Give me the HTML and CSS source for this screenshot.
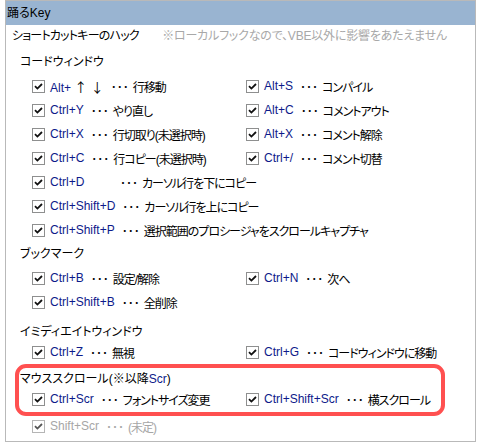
FILE: index.html
```html
<!DOCTYPE html>
<html lang="ja">
<head>
    <meta charset="UTF-8">
    <title>踊るKey</title>
    <link rel="stylesheet" href="styles.css">
</head>
<body>

    <div class="window">
        <div class="title-bar">踊るKey</div>

        <div class="content">
            <div class="hook-head">
                <span class="jp">ショートカットキーのハック</span>
                <span class="note">※ローカルフックなので、VBE以外に影響をあたえません</span>
            </div>

            <div class="section-title">コードウィンドウ</div>
            <div class="rows">
                <label class="opt"><span class="check"></span><span class="key">Alt+ <span class="arrow">↑</span> <span class="arrow">↓</span></span><span class="dots">･･･</span><span class="jp">行移動</span></label>
                <label class="opt"><span class="check"></span><span class="key">Alt+S</span><span class="dots">･･･</span><span class="jp">コンパイル</span></label>
                <label class="opt"><span class="check"></span><span class="key">Ctrl+Y</span><span class="dots">･･･</span><span class="jp">やり直し</span></label>
                <label class="opt"><span class="check"></span><span class="key">Alt+C</span><span class="dots">･･･</span><span class="jp">コメントアウト</span></label>
                <label class="opt"><span class="check"></span><span class="key">Ctrl+X</span><span class="dots">･･･</span><span class="jp">行切取り(未選択時)</span></label>
                <label class="opt"><span class="check"></span><span class="key">Alt+X</span><span class="dots">･･･</span><span class="jp">コメント解除</span></label>
                <label class="opt"><span class="check"></span><span class="key">Ctrl+C</span><span class="dots">･･･</span><span class="jp">行コピー(未選択時)</span></label>
                <label class="opt"><span class="check"></span><span class="key">Ctrl+/</span><span class="dots">･･･</span><span class="jp">コメント切替</span></label>
                <label class="opt wide"><span class="check"></span><span class="key key-pad">Ctrl+D</span><span class="dots">･･･</span><span class="jp">カーソル行を下にコピー</span></label>
                <label class="opt wide"><span class="check"></span><span class="key">Ctrl+Shift+D</span><span class="dots">･･･</span><span class="jp">カーソル行を上にコピー</span></label>
                <label class="opt wide"><span class="check"></span><span class="key">Ctrl+Shift+P</span><span class="dots">･･･</span><span class="jp">選択範囲のプロシージャをスクロールキャプチャ</span></label>
            </div>

            <div class="section-title">ブックマーク</div>
            <div class="rows">
                <label class="opt"><span class="check"></span><span class="key">Ctrl+B</span><span class="dots">･･･</span><span class="jp">設定/解除</span></label>
                <label class="opt"><span class="check"></span><span class="key">Ctrl+N</span><span class="dots">･･･</span><span class="jp">次へ</span></label>
                <label class="opt wide"><span class="check"></span><span class="key">Ctrl+Shift+B</span><span class="dots">･･･</span><span class="jp">全削除</span></label>
            </div>

            <div class="section-title short first-short">イミディエイトウィンドウ</div>
            <div class="rows short">
                <label class="opt"><span class="check"></span><span class="key">Ctrl+Z</span><span class="dots">･･･</span><span class="jp">無視</span></label>
                <label class="opt"><span class="check"></span><span class="key">Ctrl+G</span><span class="dots">･･･</span><span class="jp">コードウィンドウに移動</span></label>
            </div>

            <div class="highlight">
                <div class="section-title short">マウススクロール(※以降<span class="scr">Scr</span>)</div>
                <div class="rows short">
                    <label class="opt"><span class="check"></span><span class="key">Ctrl+Scr</span><span class="dots">･･･</span><span class="jp">フォントサイズ変更</span></label>
                    <label class="opt"><span class="check"></span><span class="key">Ctrl+Shift+Scr</span><span class="dots">･･･</span><span class="jp">横スクロール</span></label>
                </div>
            </div>
            <div class="rows short">
                <label class="opt wide disabled"><span class="check"></span><span class="key">Shift+Scr</span><span class="dots">･･･</span><span class="jp">(未定)</span></label>
            </div>
        </div>
    </div>

</body>
</html>
```

FILE: styles.css
```css
body {
    margin: 0;
    background-color: #ffffff;
    font-family: "Liberation Sans", "Noto Sans CJK JP", sans-serif;
    font-size: 12px;
    color: #000000;
    font-feature-settings: "palt";
}

.window {
    margin-left: 5px;
    width: 469px;
    height: 440px;
    border: 1px solid #b9b9b9;
}

.title-bar {
    height: 24px;
    line-height: 24px;
    padding-left: 1px;
    background-color: #99b4d1;
}

.jp {
    letter-spacing: -1px;
}

.hook-head {
    height: 22px;
    line-height: 22px;
    padding-left: 6px;
    margin-bottom: 3px;
}

.hook-head .jp {
    letter-spacing: -0.8px;
}

.hook-head .note {
    color: #a8a8a8;
    margin-left: 20px;
    letter-spacing: -0.2px;
}

.section-title {
    height: 24px;
    line-height: 24px;
    padding-left: 14px;
}

.section-title.short {
    height: 20px;
    line-height: 20px;
}

.first-short {
    margin-top: 8px;
}

.rows {
    display: grid;
    grid-template-columns: 214px 1fr;
    padding-left: 26px;
}

.opt {
    display: flex;
    align-items: center;
    height: 24px;
    white-space: nowrap;
}

.rows.short .opt {
    height: 20px;
}

.opt.wide {
    grid-column: 1 / 3;
}

.key {
    color: #0d1a8a;
}

.scr {
    color: #0d1a8a;
}

.arrow {
    font-family: "Noto Sans CJK JP", sans-serif;
    font-size: 13px;
    color: #000000;
}

.dots {
    font-family: "Noto Sans CJK JP", sans-serif;
    margin: 0 4px 0 7px;
    letter-spacing: 0;
}

.key-pad {
    display: inline-block;
    width: 63px;
}

.check {
    display: inline-block;
    width: 11px;
    height: 11px;
    margin-right: 5px;
    border: 1px solid #8e8f8f;
    background-color: #ffffff;
    background-repeat: no-repeat;
    background-position: center;
    background-image: url("data:image/svg+xml,%3Csvg xmlns='http://www.w3.org/2000/svg' width='11' height='11'%3E%3Cpath d='M2 5.2 L4.4 7.6 L9 3' fill='none' stroke='%23111' stroke-width='1.8'/%3E%3C/svg%3E");
}

.disabled,
.disabled .key {
    color: #a6a6a6;
}

.disabled .check {
    border-color: #b5b5b5;
    background-image: url("data:image/svg+xml,%3Csvg xmlns='http://www.w3.org/2000/svg' width='11' height='11'%3E%3Cpath d='M2 5.2 L4.4 7.6 L9 3' fill='none' stroke='%23555' stroke-width='1.8'/%3E%3C/svg%3E");
}

.highlight {
    margin: 2px 30px 0 9px;
    border: 4px solid #ff5050;
    border-radius: 11px;
    padding: 1px 0 3px 0;
}

.highlight .section-title {
    padding-left: 1px;
}

.highlight .rows {
    padding-left: 13px;
}
```
